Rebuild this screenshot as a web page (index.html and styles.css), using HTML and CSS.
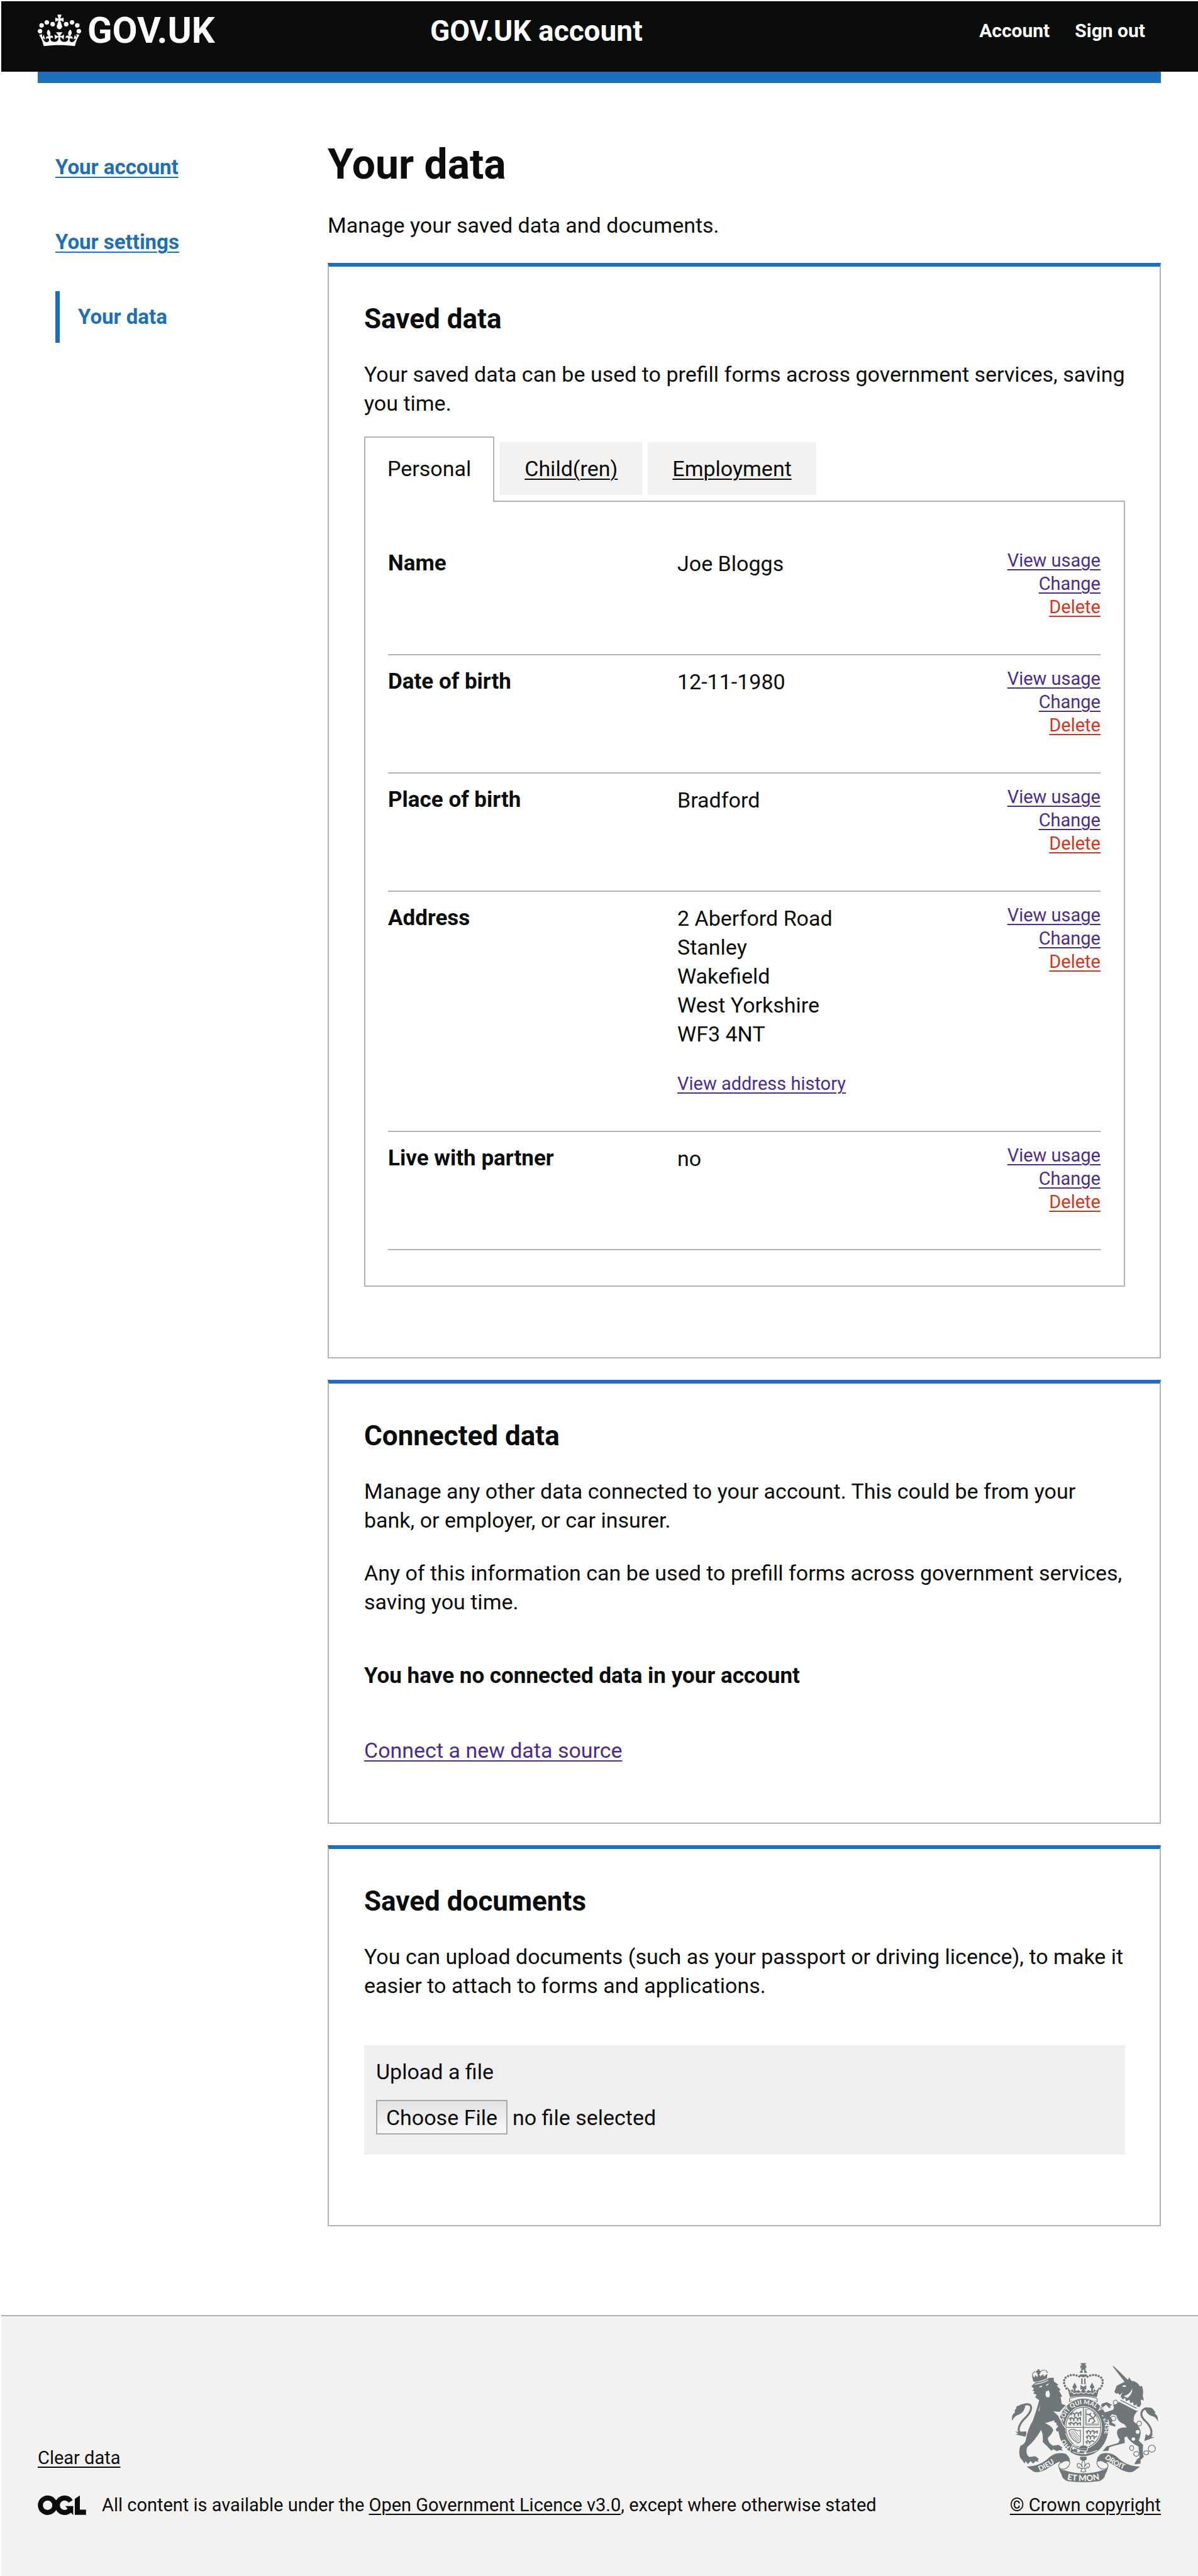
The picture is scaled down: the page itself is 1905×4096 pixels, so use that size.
FILE: index.html
```html
<!DOCTYPE html>
<html lang="en">
<head>
<meta charset="utf-8">
<meta name="viewport" content="width=device-width, initial-scale=1">
<title>Your data - GOV.UK account</title>
<link rel="stylesheet" href="styles.css">
</head>
<body>
<header class="header">
  <div class="container header-inner">
    <a class="logo" href="#">
      <svg class="logo-crown" viewBox="0 0 132 97" aria-hidden="true"><path fill="currentColor" fill-rule="evenodd" d="M25 30.2c3.5 1.5 7.7-.2 9.1-3.7 1.5-3.6-.2-7.8-3.9-9.2-3.6-1.4-7.6.3-9.1 3.9-1.4 3.5.3 7.5 3.9 9zM9 39.5c3.6 1.5 7.8-.2 9.2-3.7 1.5-3.6-.2-7.8-3.9-9.1-3.6-1.5-7.6.2-9.1 3.8-1.4 3.5.3 7.5 3.8 9zM4.4 57.2c3.5 1.5 7.7-.2 9.1-3.8 1.5-3.6-.2-7.7-3.9-9.1-3.5-1.5-7.6.3-9.1 3.8-1.4 3.5.3 7.6 3.9 9.1zm38.3-21.4c3.5 1.5 7.7-.2 9.1-3.8 1.5-3.6-.2-7.7-3.9-9.1-3.6-1.5-7.6.3-9.1 3.8-1.3 3.6.4 7.7 3.9 9.1zm64.4-5.6c-3.6 1.5-7.8-.2-9.1-3.7-1.5-3.6.2-7.8 3.8-9.2 3.6-1.4 7.7.3 9.2 3.9 1.3 3.5-.4 7.5-3.9 9zm15.9 9.3c-3.6 1.5-7.7-.2-9.1-3.7-1.5-3.6.2-7.8 3.7-9.1 3.6-1.5 7.7.2 9.2 3.8 1.5 3.5-.3 7.5-3.8 9zm4.7 17.7c-3.6 1.5-7.8-.2-9.2-3.8-1.5-3.6.2-7.7 3.9-9.1 3.6-1.5 7.7.3 9.2 3.8 1.3 3.5-.4 7.6-3.9 9.1zM89.3 35.8c-3.6 1.5-7.8-.2-9.2-3.8-1.4-3.6.2-7.7 3.9-9.1 3.6-1.5 7.7.3 9.2 3.8 1.4 3.6-.3 7.7-3.9 9.1zM69.7 17.7l8.9 4.7V9.3l-8.9 2.8c-.2-.3-.5-.6-.9-.9L72.4 0H59.6l3.5 11.2c-.3.3-.6.5-.9.9l-8.8-2.8v13.1l8.8-4.7c.3.3.6.7.9.9l-5 15.4v.1c-.2.8-.4 1.6-.4 2.4 0 4.1 3.1 7.5 7 8.1h.2c.3 0 .7.1 1 .1.4 0 .7 0 1-.1h.2c4-.6 7.1-4.1 7.1-8.1 0-.8-.1-1.7-.4-2.4V34l-5.1-15.4c.4-.2.7-.6 1-.9zM66 92.8c16.9 0 32.8 1.1 47.1 3.2 4-16.9 8.9-26.7 14-33.5l-9.6-3.4c1 4.9 1.1 7.2 0 10.2-1.5-1.4-3-4.3-4.2-8.7L108.6 76c2.8-2 5-3.2 7.5-3.3-4.4 9.4-10 11.9-13.6 11.2-4.3-.8-6.3-4.6-5.6-7.9 1-4.7 5.7-5.9 8-.5 4.3-8.7-3-11.4-7.6-8.8 7.1-7.2 7.9-13.5 2.1-21.1-8 6.1-8.1 12.3-4.5 20.8-4.7-5.4-12.1-2.5-9.5 6.2 3.4-5.2 7.9-2 7.2 3.1-.6 4.3-6.4 7.8-13.5 7.2-10.3-.9-10.9-8-11.2-13.8 2.5-.5 7.1 1.8 11 7.3L80.2 60c-4.1 4.4-8 5.3-12.3 5.4 1.4-4.4 8-11.6 8-11.6H55.5s6.4 7.2 7.9 11.6c-4.2-.1-8-1-12.3-5.4l1.4 16.4c3.9-5.5 8.5-7.7 10.9-7.3-.3 5.8-.9 12.8-11.1 13.8-7.2.6-12.9-2.9-13.5-7.2-.7-5 3.8-8.3 7.1-3.1 2.7-8.7-4.6-11.6-9.4-6.2 3.7-8.5 3.6-14.7-4.6-20.8-5.8 7.6-5 13.9 2.2 21.1-4.7-2.6-11.9.1-7.7 8.8 2.3-5.5 7.1-4.2 8.1.5.7 3.3-1.3 7.1-5.7 7.9-3.5.7-9-1.8-13.5-11.2 2.5.1 4.7 1.3 7.5 3.3l-4.7-15.4c-1.2 4.4-2.7 7.2-4.3 8.7-1.1-3-.9-5.3 0-10.2l-9.5 3.4c5 6.9 9.9 16.7 14 33.5 14.8-2.1 30.8-3.2 47.7-3.2z"/></svg>
      <span class="logo-text">GOV.UK</span>
    </a>
    <a class="service-name" href="#">GOV.UK account</a>
    <nav class="header-nav" aria-label="Account">
      <a href="#">Account</a>
      <a href="#">Sign out</a>
    </nav>
  </div>
</header>
<div class="container header-bar"></div>

<div class="container layout">
  <nav class="side-nav" aria-label="Sections">
    <a href="#">Your account</a>
    <a href="#">Your settings</a>
    <a href="#" class="current" aria-current="page">Your data</a>
  </nav>

  <main class="main">
    <h1>Your data</h1>
    <p>Manage your saved data and documents.</p>

    <section class="card">
      <h2>Saved data</h2>
      <p>Your saved data can be used to prefill forms across government services, saving you time.</p>
      <div class="tabs">
        <a class="tab selected" href="#personal">Personal</a>
        <a class="tab" href="#children">Child(ren)</a>
        <a class="tab" href="#employment">Employment</a>
      </div>
      <dl class="panel" id="personal">
        <div class="row">
          <dt>Name</dt>
          <dd class="value">Joe Bloggs</dd>
          <dd class="actions"><a href="#">View usage</a><a href="#">Change</a><a class="delete" href="#">Delete</a></dd>
        </div>
        <div class="row">
          <dt>Date of birth</dt>
          <dd class="value">12-11-1980</dd>
          <dd class="actions"><a href="#">View usage</a><a href="#">Change</a><a class="delete" href="#">Delete</a></dd>
        </div>
        <div class="row">
          <dt>Place of birth</dt>
          <dd class="value">Bradford</dd>
          <dd class="actions"><a href="#">View usage</a><a href="#">Change</a><a class="delete" href="#">Delete</a></dd>
        </div>
        <div class="row">
          <dt>Address</dt>
          <dd class="value">2 Aberford Road<br>Stanley<br>Wakefield<br>West Yorkshire<br>WF3 4NT<a class="history" href="#">View address history</a></dd>
          <dd class="actions"><a href="#">View usage</a><a href="#">Change</a><a class="delete" href="#">Delete</a></dd>
        </div>
        <div class="row">
          <dt>Live with partner</dt>
          <dd class="value">no</dd>
          <dd class="actions"><a href="#">View usage</a><a href="#">Change</a><a class="delete" href="#">Delete</a></dd>
        </div>
      </dl>
    </section>

    <section class="card card-connected">
      <h2>Connected data</h2>
      <p>Manage any other data connected to your account. This could be from your bank, or employer, or car insurer.</p>
      <p>Any of this information can be used to prefill forms across government services, saving you time.</p>
      <h3>You have no connected data in your account</h3>
      <a class="link" href="#">Connect a new data source</a>
    </section>

    <section class="card">
      <h2>Saved documents</h2>
      <p>You can upload documents (such as your passport or driving licence), to make it easier to attach to forms and applications.</p>
      <div class="upload">
        <label for="file">Upload a file</label>
        <div class="upload-row">
          <input class="upload-input" type="file" id="file">
          <span>no file selected</span>
        </div>
      </div>
    </section>
  </main>
</div>

<footer class="footer">
  <div class="container footer-inner">
    <div class="footer-meta">
      <a href="#">Clear data</a>
      <div class="licence">
        <svg class="ogl" viewBox="0 0 483.2 195.7" role="img" aria-label="Open Government Licence"><path fill="currentColor" d="M421.5 142.8V.1l-50.7 32.3v161.1h112.4v-50.7zm-122.3-9.6A47.12 47.12 0 0 1 221 97.8c0-26 21.1-47.1 47.1-47.1 16.7 0 31.4 8.7 39.7 21.8l42.7-27.2A97.63 97.63 0 0 0 268.1 0c-36.5 0-68.3 20.1-85.1 49.7A98 98 0 0 0 97.8 0C43.9 0 0 43.9 0 97.8s43.9 97.8 97.8 97.8c36.5 0 68.3-20.1 85.1-49.7a97.76 97.76 0 0 0 149.6 25.4l19.4 22.2h3v-87.8h-80l24.3 27.5zM97.8 145c-26 0-47.1-21.1-47.1-47.1s21.1-47.1 47.1-47.1 47.1 21.1 47.1 47.1S123.8 145 97.8 145"/></svg>
        <span>All content is available under the <a href="#">Open Government Licence v3.0</a>, except where otherwise stated</span>
      </div>
    </div>
    <a class="copyright" href="#">
      <svg class="arms" viewBox="86 88 752 614" aria-hidden="true">
        <defs>
          <path id="garter" d="M386 520 A108 124 0 1 1 512 530"/>
          <path id="dieu" d="M228 645 Q292 620 342 572"/>
          <path id="etmon" d="M360 686 Q453 706 546 686"/>
          <path id="droit" d="M562 577 Q613 624 704 650"/>
        </defs>
        <!-- lion -->
        <g class="ink">
          <path d="M186 208 L207 188 Q250 184 275 166 L300 164 L302 184 L325 200 L316 206 L336 226 L328 232 L344 260 L336 264 L342 300 L362 306 L330 340 L302 338 L344 382 L362 420 L358 438 L366 446 L352 454 L346 442 L338 446 L332 436 L318 442 L312 430 L324 414 L314 408 L320 396 L304 394 L304 384 L256 398 Q292 412 298 434 Q294 452 270 474 Q272 500 296 514 L326 510 L346 524 L340 530 L348 540 L330 536 L318 542 L298 532 L288 540 L268 518 L244 494 Q248 458 236 432 Q206 486 164 522 Q154 560 176 572 L206 568 L224 582 L218 590 L224 598 L206 594 L196 606 L182 594 L168 608 L156 594 L150 606 L136 584 L128 576 Q118 540 130 514 Q148 508 156 490 Q166 430 194 384 L212 330 L226 280 L206 266 L212 250 L196 246 L202 234 L190 230 L200 222 Z"/>
          <path d="M86 384 Q84 350 102 344 Q96 330 108 324 Q104 312 122 308 Q140 296 156 302 Q150 344 122 354 Q100 360 88 384z"/>
          <path d="M156 468 L104 456 L118 452 L102 440 L124 444 L112 428 L132 442 L160 440z"/>
          <path d="M196 184 L188 152 L202 164 L206 150 L216 162 L222 140 L232 158 L246 146 L250 158 L268 144 L266 168 Q232 184 206 186z"/>
          <path d="M216 122h12v8h6v8h-6v10h-12v-10h-6v-8h6z"/>
        </g>
        <path class="line thick" d="M160 452 Q114 458 122 420 Q130 392 160 366 Q192 330 182 308 Q174 296 146 304"/>
        <path class="line beads" d="M194 160 Q186 140 206 134 Q218 134 222 146 M228 142 Q236 124 254 126 Q272 132 266 146"/>
        <g class="paper">
          <path d="M222 212 L242 204 L238 214z M258 204 L276 192 L270 204z M262 232 Q268 238 274 228 Q286 250 278 264 Q262 270 258 252z"/>
          <path d="M202 196 Q240 192 272 176 L272 180 Q240 196 204 200z"/>
          <path d="M230 306 L222 336 L226 336z"/>
        </g>

        <!-- unicorn -->
        <g class="ink">
          <path d="M602 104 L612 108 L688 182 L668 190z"/>
          <path d="M612 238 L624 206 L656 190 L682 176 L688 163 L700 180 Q732 184 744 210 L754 206 Q764 236 758 256 L764 282 L748 276 L750 302 L740 316 L690 300 L650 284 L644 262 L654 240 L640 254 L632 244 L622 246z"/>
          <path d="M640 286 L734 334 Q708 356 712 390 Q742 410 748 446 Q746 470 738 488 L760 510 Q756 556 764 570 L746 588 L748 606 L714 610 L728 584 L742 574 L736 518 Q694 498 676 466 L664 472 L666 500 L618 512 L586 522 L582 540 L552 542 L572 518 L632 500 L640 484 Q620 454 628 434 Q640 418 676 420 L664 404 Q630 394 622 358 L600 352 L590 364 L604 384 L598 394 L618 406 L616 416 L588 408 L574 388 L560 366 L556 346 L574 340 L604 330 L612 318 L584 320 L570 304 L554 316 L558 334 L542 316 L548 298 L574 290 L604 306 L622 300z"/>
          <path d="M836 390 Q838 356 820 350 Q826 338 814 332 Q812 320 796 318 L768 318 Q776 354 806 362 Q826 366 836 390z"/>
          <path d="M766 490 L820 470 L802 470 L812 452 L792 466 L774 454z"/>
        </g>
        <path class="line thick" d="M774 474 Q812 462 800 428 Q790 402 764 380 Q742 356 756 334 Q766 322 784 322"/>
        <g class="paper">
          <path d="M652 208 Q664 198 674 208 Q662 216 652 208z M660 260 Q694 250 704 220 Q706 250 680 268z"/>
          <path d="M646 262 L654 276 L668 268 L672 286 L690 278 L694 296 L708 290 L712 308 L728 302 L726 318 L738 316 L728 336 L636 288z"/>
          <circle cx="600" cy="314" r="9"/><circle cx="732" cy="443" r="10"/><circle cx="710" cy="480" r="9"/>
        </g>
        <path class="line" d="M644 280 L726 322"/>
        <g class="line">
          <ellipse cx="618" cy="292" rx="11" ry="12"/><ellipse cx="607" cy="374" rx="13" ry="12"/><ellipse cx="740" cy="400" rx="12" ry="12"/><ellipse cx="701" cy="526" rx="10" ry="13"/><ellipse cx="725" cy="556" rx="13" ry="12"/><ellipse cx="776" cy="550" rx="12" ry="10"/><circle cx="805" cy="529" r="18"/>
        </g>

        <!-- crown -->
        <g class="ink">
          <path d="M370 212 L388 234 L396 222 L404 236 L404 222 L396 214 L408 190 L420 212 L412 222 L414 234 L428 228 L440 238 L448 222 L438 226 V202 L453 212 L468 202 V226 L458 222 L466 238 L478 228 L492 234 L494 222 L486 212 L498 190 L510 214 L502 222 L502 236 L510 222 L518 234 L536 212 L522 264 Q453 250 384 264z"/>
          <path d="M438 90h30l-8 14 8-4v18l-8-6 6 12h-26l6-12-8 6v-18l8 4z"/>
          <path d="M434 140 Q438 124 449 124 V140z M472 140 Q468 124 457 124 V140z"/>
          <path d="M434 148 H472 Q470 162 453 162 Q436 162 434 148z"/>
          <path d="M442 168h7v30h-7z M457 168h7v30h-7z"/>
        </g>
        <path class="line beads big" d="M366 220 Q342 182 364 162 Q396 140 436 160 M540 220 Q564 182 542 162 Q510 140 472 160"/>
        <path class="gap" d="M384 240 Q396 232 404 248 Q414 238 428 246 Q440 236 453 246 Q466 236 478 246 Q492 238 502 248 Q510 232 522 240"/>
        <path class="line" d="M384 290 Q376 270 392 268 Q453 252 514 268 Q530 270 522 290 M384 288 Q453 258 522 288"/>

        <!-- garter and shield -->
        <ellipse class="paper" cx="453" cy="420" rx="134" ry="152"/>
        <ellipse class="ink" cx="453" cy="420" rx="129" ry="148"/>
        <ellipse class="paper" cx="453" cy="420" rx="96" ry="110"/>
        <ellipse class="line" cx="453" cy="420" rx="90" ry="104"/>
        <path class="line" d="M453 316 V524 M363 420 H543"/>
        <g class="line crest">
          <path d="M382 352 l14 -8 10 8 12 -8 10 6 12 -10 M394 344 l-4 14 M410 352 l-4 14 M426 350 l2 14 M440 336 v24"/>
          <path d="M378 376 l14 -6 10 6 12 -8 12 8 14 -8 M390 372 l-4 14 M406 378 l-4 10 M422 376 l2 12 M438 368 v18"/>
          <path d="M376 402 l14 -8 12 8 12 -8 12 8 14 -8 M388 398 l-4 12 M404 402 l2 8 M422 402 v8 M438 396 v14"/>
          <path d="M466 444 l14 -8 10 8 12 -8 12 8 14 -6 M474 440 l-2 14 M490 446 l-2 10 M506 442 l4 12 M524 442 v10"/>
          <path d="M466 470 l14 -8 10 8 12 -8 10 8 12 -6 M474 468 l-2 12 M490 470 l-2 12 M506 470 l4 10"/>
          <path d="M464 496 l12 -8 10 8 12 -8 10 6 M472 494 l-2 10 M486 498 l-2 8"/>
          <path d="M470 352 L486 356 L492 346 M482 352 L502 372 L486 376 L480 392 M502 372 L512 388 L498 398 M504 372 L516 358 L506 346"/>
        </g>
        <path class="line fine" d="M463 328 V408 H532 Q528 352 486 326z M468 334 V402 H526"/>
        <path class="line" d="M378 436 Q396 426 414 434 Q428 440 438 434 V490 Q430 506 420 496 Q384 480 378 436z"/>
        <path class="line fine" d="M388 440 L430 492 M396 438 L432 482 M406 436 L434 470 M384 450 L420 492"/>
        <path class="ink" d="M440 514 h28 l6 14 h-42z"/>
        <path class="gap" d="M384 552 Q384 522 402 508 Q410 504 416 514 M400 546 Q452 568 524 538 M400 520 Q430 542 470 542 L480 518"/>
        <circle class="paper" cx="428" cy="541" r="7"/><circle class="paper" cx="463" cy="552" r="7"/><circle class="paper" cx="402" cy="526" r="7"/>
        <text class="motto garter-text"><textPath href="#garter" startOffset="0">HO</textPath></text>
        <text class="motto garter-text"><textPath href="#garter" startOffset="140">SOIT QUI MAL Y</textPath></text>
        <text class="motto garter-text"><textPath href="#garter" startOffset="400">PENSE</textPath></text>
        <path class="ink" d="M302 338 L322 360 L336 386 L346 408 L362 428 L358 438 L366 446 L352 454 L346 442 L338 446 L332 436 L318 442 L312 430 L324 414 L304 384z"/>
        <path class="gap" d="M302 338 L324 358 L338 384 L348 406 L364 426"/>
        <path class="ink" d="M545 346 L574 340 L600 352 L590 364 L574 388 L560 366z"/>

        <!-- ribbon -->
        <path class="ink" d="M162 621 Q232 620 280 572 Q316 542 362 556 Q386 572 384 600 Q364 584 340 604 L328 596 Q286 618 262 636 Q218 658 196 646 Q178 634 162 621z"/>
        <path class="ink" d="M744 621 Q674 620 626 572 Q590 542 544 556 Q520 572 522 600 Q542 584 566 604 L578 596 Q620 618 644 636 Q688 658 710 646 Q728 634 744 621z"/>
        <path class="line" d="M384 598 Q384 622 358 634 Q326 636 326 618 Q328 602 342 598 M522 598 Q522 622 548 634 Q580 636 580 618 Q578 602 564 598"/>
        <path class="ink" d="M326 622 Q340 640 356 640 Q398 656 453 656 Q508 656 550 640 Q566 640 580 622 Q576 646 566 660 Q562 688 532 696 Q453 706 374 696 Q344 688 340 660 Q330 646 326 622z"/>
        <text class="motto"><textPath href="#dieu">DIEU</textPath></text>
        <text class="motto et-mon"><textPath href="#etmon" startOffset="50%" text-anchor="middle">ET MON</textPath></text>
        <text class="motto"><textPath href="#droit">DROIT</textPath></text>
        <path class="ink" d="M436 571 h34 v14 l-10 6 h-14 l-10 -6z"/>
        <path class="line" d="M453 586 Q440 602 448 624 Q436 600 424 606 Q416 618 428 628 L436 622 M453 586 Q466 602 458 624 Q470 600 482 606 Q490 618 478 628 L470 622 M434 630 H472 M446 632 L440 646 L453 650 L466 646 L460 632"/>
      </svg>
      <span>© Crown copyright</span>
    </a>
  </div>
</footer>
</body>
</html>
```
FILE: styles.css
```css
* { box-sizing: border-box; }

body {
  margin: 0;
  padding: 2px 0 0 2px;
  background: #fff;
  color: #0b0c0c;
  font: 34px/46px Roboto, "Liberation Sans", sans-serif;
}

h1, h2, h3, p, dl, dd { margin: 0; }

a {
  color: inherit;
  text-decoration: underline;
  text-decoration-thickness: 2px;
  text-underline-offset: 4px;
}

.container { margin: 0 59px 0 58px; }

/* Header */
.header { background: #0b0c0c; color: #fff; }
.header-inner {
  display: grid;
  grid-template-columns: 624px 1fr auto;
  align-items: start;
  height: 112px;
  padding: 17px 25px 0 0;
}
.header a { text-decoration: none; font-weight: 700; }
.logo { display: flex; align-items: center; gap: 10px; }
.logo-crown { width: 69px; height: 51px; }
.logo-text { font-size: 58px; line-height: 58px; }
.service-name { font-size: 46px; line-height: 60px; }
.header-nav { display: flex; gap: 40px; font-size: 30px; line-height: 60px; }
.header-bar { height: 18px; background: #1d70b8; }

/* Page */
.layout {
  display: grid;
  grid-template-columns: 461px 1fr;
  padding: 93px 0 141px;
}
.side-nav {
  display: flex;
  flex-direction: column;
  gap: 37px;
  padding-left: 28px;
  color: #1d70b8;
  font-size: 33px;
  font-weight: 700;
}
.side-nav a { padding: 18px 0; }
.side-nav .current {
  padding-left: 29px;
  border-left: 7px solid #1d70b8;
  text-decoration: none;
}
.main { min-width: 0; padding-top: 2px; }

h1 { margin-bottom: 38px; font-size: 66px; line-height: 70px; }
h2 { margin-bottom: 41px; font-size: 44px; line-height: 48px; }
h3 { font-size: 35px; line-height: 46px; }

.card {
  margin-top: 37px;
  padding: 59px 55px 112px 56px;
  border: 2px solid #b1b4b6;
  border-top: 6px solid #1d70b8;
}
.card + .card { margin-top: 34px; }
.card p { margin-right: -4px; }
.card p + p { margin-top: 38px; }
.card-connected { padding-bottom: 92px; }
.card-connected h3 { margin: 72px 0; }
.link { display: table; color: #4c2c92; }

/* Tabs */
.tabs { display: flex; align-items: flex-end; gap: 9px; margin-top: 30px; }
.tab { margin-bottom: 9px; padding: 19px 39px; background: #f3f2f1; }
.tab.selected {
  position: relative;
  margin-bottom: -2px;
  padding: 26px 35px 30px;
  border: 2px solid #b1b4b6;
  border-bottom: 0;
  background: #fff;
  text-decoration: none;
}
.panel { padding: 56px 37px 56px 36px; border: 2px solid #b1b4b6; }
.row {
  display: grid;
  grid-template-columns: 460px 1fr auto;
  padding: 19px 0 56px;
  border-bottom: 2px solid #b1b4b6;
}
.row dt { font-size: 35px; font-weight: 700; }
.actions {
  display: flex;
  flex-direction: column;
  align-items: flex-end;
  color: #4c2c92;
  font-size: 29px;
  line-height: 37px;
}
.actions .delete { color: #d4351c; }
.history {
  display: table;
  margin-top: 38px;
  color: #4c2c92;
  font-size: 29px;
  line-height: 37px;
}

/* Upload */
.upload { margin-top: 72px; padding: 19px 19px 32px; background: #efefef; }
.upload label { display: block; margin-bottom: 22px; }
.upload-row { display: flex; align-items: center; gap: 8px; }
.upload-input {
  width: 209px;
  height: 55px;
  overflow: hidden;
  color: transparent;
  font: inherit;
}
.upload-input::file-selector-button {
  width: 209px;
  height: 55px;
  margin: 0;
  padding: 0;
  border: 2px solid #a9a9a9;
  border-radius: 0;
  background: linear-gradient(#e3e3e3, #f8f8f8);
  color: #0b0c0c;
  font: inherit;
}

/* Footer */
.footer {
  padding: 74px 0 94px;
  border-top: 2px solid #b1b4b6;
  background: #f3f2f1;
  font-size: 29px;
  line-height: 37px;
}
.footer-inner { display: flex; justify-content: space-between; align-items: flex-end; }
.footer-meta { display: flex; flex-direction: column; align-items: flex-start; gap: 38px; }
.licence { display: flex; align-items: center; gap: 25px; }
.ogl { width: 77px; height: 31px; }
.copyright { display: flex; flex-direction: column; align-items: center; gap: 18px; }
.arms { width: 233px; height: 190px; }
.ink { fill: #6f777b; }
.paper { fill: #f3f2f1; }
.line { fill: none; stroke: #6f777b; stroke-width: 4; }
.line.thick { stroke-width: 10; }
.line.fine { stroke-width: 3; }
.line.crest { stroke-width: 6; }
.line.beads { stroke-width: 7; stroke-linecap: round; stroke-dasharray: 0 10; }
.line.beads.big { stroke-width: 12; stroke-dasharray: 0 15; }
.gap { fill: none; stroke: #f3f2f1; stroke-width: 4; }
.motto { fill: #f3f2f1; font: 900 37px Lato, sans-serif; }
.et-mon { font-size: 43px; }
.garter-text { font-size: 32px; }
```
